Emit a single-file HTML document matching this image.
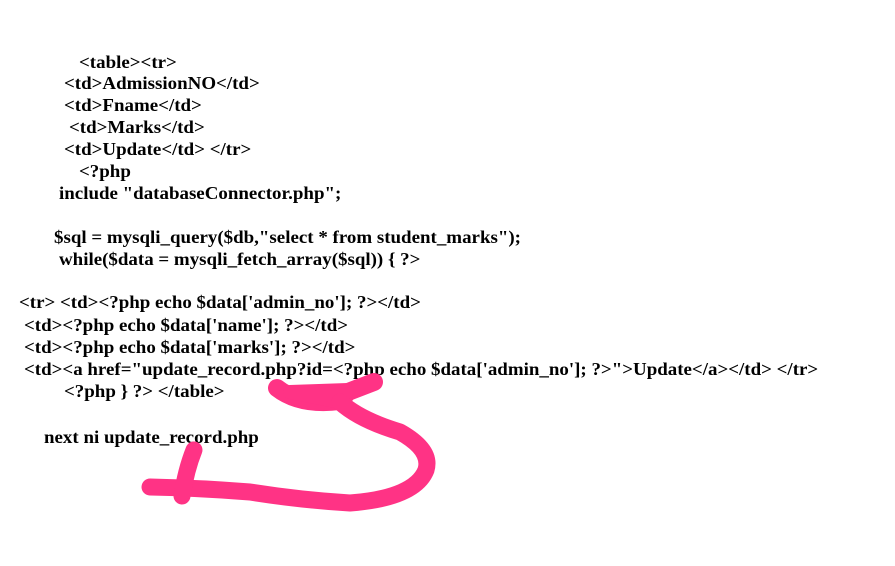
<!DOCTYPE html>
<html><head><style>
body{margin:0;width:895px;height:566px;background:#fff;position:relative;overflow:hidden;font-family:"Liberation Serif",serif;font-weight:bold;font-size:17.5px;color:#000}
.l{position:absolute;white-space:pre;line-height:18px;transform:scaleX(1.082);transform-origin:0 0}
svg{position:absolute;left:0;top:0}
</style></head><body>
<div class="l" style="left:79px;top:53px">&lt;table&gt;&lt;tr&gt;</div>
<div class="l" style="left:64px;top:74px">&lt;td&gt;AdmissionNO&lt;/td&gt;</div>
<div class="l" style="left:64px;top:96px">&lt;td&gt;Fname&lt;/td&gt;</div>
<div class="l" style="left:69px;top:118px">&lt;td&gt;Marks&lt;/td&gt;</div>
<div class="l" style="left:64px;top:140px">&lt;td&gt;Update&lt;/td&gt; &lt;/tr&gt;</div>
<div class="l" style="left:79px;top:162px">&lt;?php</div>
<div class="l" style="left:59px;top:184px">include "databaseConnector.php";</div>
<div class="l" style="left:54px;top:228px">$sql = mysqli_query($db,"select * from student_marks");</div>
<div class="l" style="left:59px;top:250px">while($data = mysqli_fetch_array($sql)) { ?&gt;</div>
<div class="l" style="left:19px;top:293px">&lt;tr&gt; &lt;td&gt;&lt;?php echo $data['admin_no']; ?&gt;&lt;/td&gt;</div>
<div class="l" style="left:24px;top:316px">&lt;td&gt;&lt;?php echo $data['name']; ?&gt;&lt;/td&gt;</div>
<div class="l" style="left:24px;top:338px">&lt;td&gt;&lt;?php echo $data['marks']; ?&gt;&lt;/td&gt;</div>
<div class="l" style="left:24px;top:360px">&lt;td&gt;&lt;a href="update_record.php?id=&lt;?php echo $data['admin_no']; ?&gt;"&gt;Update&lt;/a&gt;&lt;/td&gt; &lt;/tr&gt;</div>
<div class="l" style="left:64px;top:382px">&lt;?php } ?&gt; &lt;/table&gt;</div>
<div class="l" style="left:44px;top:428px">next ni update_record.php</div>
<svg width="895" height="566">
<g fill="none" stroke="#ff3385" stroke-linecap="round" stroke-linejoin="round">
<path d="M277 388 Q300 406 340 401 L348 392 L374 382" stroke-width="18"/>
<path d="M290 392 L348 390 L340 402 Z" stroke-width="14" fill="#ff3385"/>
<path d="M340 402 Q360 420 400 432 Q432 450 426 470 Q415 498 350 503 Q300 500 250 492 Q200 488 150 487" stroke-width="17"/>
<path d="M194 450 Q186 470 182 496" stroke-width="17"/>
</g>
</svg>
</body></html>
